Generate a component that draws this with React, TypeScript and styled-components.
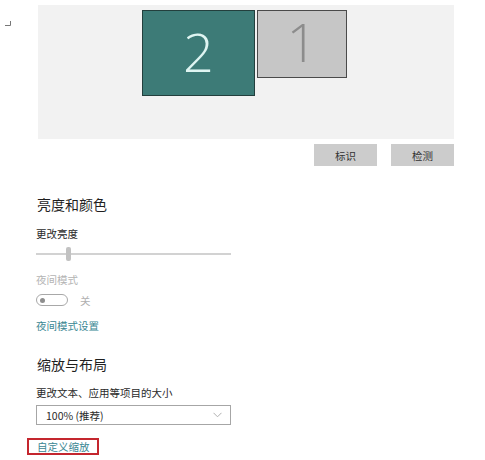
import React from "react";
import styled, { createGlobalStyle } from "styled-components";

const GlobalStyle = createGlobalStyle`
  html, body {
    margin: 0;
    padding: 0;
    background: #ffffff;
  }
  body {
    font-family: "Noto Sans CJK SC", "Noto Sans", sans-serif;
    color: #222222;
  }
`;

const Page = styled.div`
  width: 485px;
  height: 460px;
  overflow: hidden;
  display: flex;
  flex-direction: column;
`;

const TopRow = styled.div`
  display: flex;
  padding-top: 5px;
`;

const CornerMark = styled.div`
  width: 38px;
  padding: 2px 0 0 5px;
  box-sizing: border-box;
`;

const Preview = styled.div`
  width: 416px;
  height: 134px;
  background: #f2f2f2;
  display: flex;
  align-items: flex-start;
  gap: 2px;
  padding: 5px 0 0 104px;
  box-sizing: border-box;
`;

interface MonitorProps {
  primary?: boolean;
}
const Monitor = styled.div<MonitorProps>`
  box-sizing: border-box;
  width: ${(p) => (p.primary ? "113px" : "90px")};
  height: ${(p) => (p.primary ? "86px" : "68px")};
  background: ${(p) => (p.primary ? "#3d7b77" : "#c6c6c6")};
  border: 1px solid ${(p) => (p.primary ? "#233f3d" : "#4a4a4a")};
  color: ${(p) => (p.primary ? "#dff5f2" : "#8c8c8c")};
  display: flex;
  align-items: center;
  justify-content: center;
  font-family: "Open Sans", "Noto Sans", sans-serif;
  font-weight: 300;
  font-size: 54px;
  line-height: 1;
  padding-bottom: ${(p) => (p.primary ? "4px" : "6px")};
`;

const ButtonRow = styled.div`
  display: flex;
  justify-content: flex-end;
  gap: 14px;
  width: 454px;
  margin-top: 5px;
`;

const GrayButton = styled.div`
  width: 63px;
  height: 22px;
  background: #cccccc;
  color: #333333;
  font-size: 10.5px;
  display: flex;
  align-items: center;
  justify-content: center;
`;

const Content = styled.div`
  padding-left: 36px;
  display: flex;
  flex-direction: column;
  align-items: flex-start;
`;

interface GapProps {
  top: number;
}
const Heading = styled.div<GapProps>`
  font-size: 14px;
  line-height: 20px;
  color: #1f1f1f;
  margin-top: ${(p) => p.top}px;
  padding-left: 1px;
`;

interface LabelProps extends GapProps {
  muted?: boolean;
}
const Label = styled.div<LabelProps>`
  font-size: 10.5px;
  line-height: 16px;
  color: ${(p) => (p.muted ? "#b4b4b4" : "#2a2a2a")};
  margin-top: ${(p) => p.top}px;
`;

const Slider = styled.div`
  position: relative;
  width: 195px;
  height: 16px;
  margin-top: 4px;
  display: flex;
  align-items: center;
`;

const Track = styled.div`
  width: 100%;
  height: 2px;
  background: #d2d2d2;
`;

const Thumb = styled.div`
  position: absolute;
  left: 30px;
  top: 1px;
  width: 5px;
  height: 14px;
  border-radius: 2px;
  background: #c2c2c2;
`;

const ToggleRow = styled.div`
  display: flex;
  align-items: center;
  gap: 12px;
  margin-top: 6px;
  height: 12px;
`;

const Toggle = styled.div`
  box-sizing: border-box;
  width: 32px;
  height: 12px;
  border: 1.5px solid #a8a8a8;
  border-radius: 6px;
  display: flex;
  align-items: center;
  padding-left: 3px;
`;

const Knob = styled.div`
  width: 5px;
  height: 5px;
  border-radius: 50%;
  background: #8e8e8e;
`;

const ToggleText = styled.span`
  font-size: 10.5px;
  color: #b0b0b0;
`;

const Link = styled.div<GapProps>`
  font-size: 10.5px;
  line-height: 16px;
  color: #3a8793;
  margin-top: ${(p) => p.top}px;
`;

const Dropdown = styled.div`
  box-sizing: border-box;
  width: 195px;
  height: 20px;
  margin-top: 4px;
  border: 1.5px solid #a6a6a6;
  display: flex;
  align-items: center;
  justify-content: space-between;
  padding: 0 8px 0 9px;
  font-size: 10.5px;
  color: #2a2a2a;
`;

const Highlight = styled.div`
  box-sizing: border-box;
  margin: 13px 0 0 -9px;
  width: 72px;
  height: 17px;
  border: 2px solid #c4262e;
  display: flex;
  align-items: center;
  padding-left: 8px;
`;

const LinkText = styled.span`
  font-size: 10.5px;
  line-height: 13px;
  color: #3a8793;
`;

export default function App() {
  return (
    <Page>
      <GlobalStyle />
      <TopRow>
        <CornerMark>
          <svg width="6" height="5" viewBox="0 0 6 5">
            <path d="M5.5 0 V4.5 H0" fill="none" stroke="#777" strokeWidth="1" />
          </svg>
        </CornerMark>
        <Preview>
          <Monitor primary>2</Monitor>
          <Monitor>1</Monitor>
        </Preview>
      </TopRow>
      <ButtonRow>
        <GrayButton>标识</GrayButton>
        <GrayButton>检测</GrayButton>
      </ButtonRow>
      <Content>
        <Heading top={28}>亮度和颜色</Heading>
        <Label top={12}>更改亮度</Label>
        <Slider>
          <Track />
          <Thumb />
        </Slider>
        <Label top={10} muted>
          夜间模式
        </Label>
        <ToggleRow>
          <Toggle>
            <Knob />
          </Toggle>
          <ToggleText>关</ToggleText>
        </ToggleRow>
        <Link top={12}>夜间模式设置</Link>
        <Heading top={20}>缩放与布局</Heading>
        <Label top={11}>更改文本、应用等项目的大小</Label>
        <Dropdown>
          <span>100% (推荐)</span>
          <svg width="9" height="6" viewBox="0 0 9 6">
            <path d="M0.5 0.8 L4.5 4.8 L8.5 0.8" fill="none" stroke="#b0b0b0" strokeWidth="1" />
          </svg>
        </Dropdown>
        <Highlight>
          <LinkText>自定义缩放</LinkText>
        </Highlight>
      </Content>
    </Page>
  );
}
